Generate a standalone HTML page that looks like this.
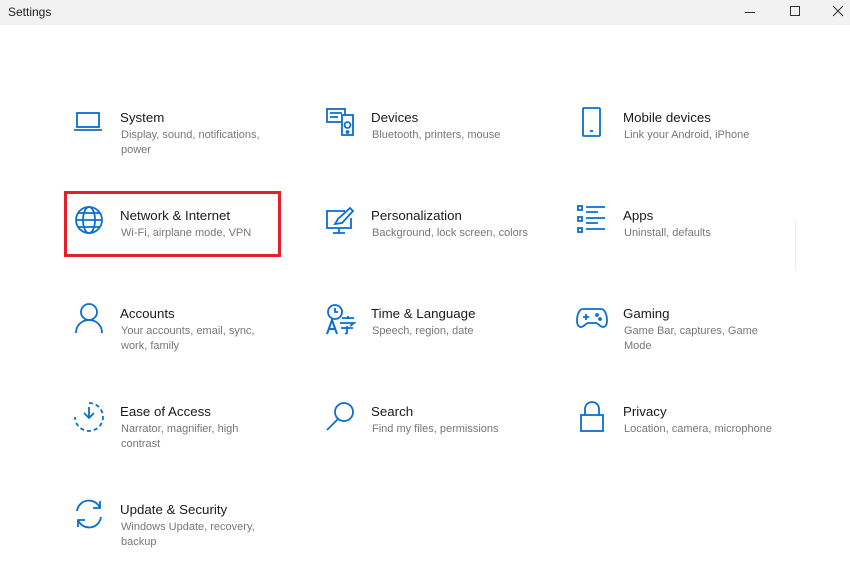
<!DOCTYPE html>
<html><head><meta charset="utf-8"><style>
body{margin:0;width:850px;height:572px;background:#fff;font-family:"Segoe UI","Liberation Sans",sans-serif;position:relative;overflow:hidden}
.tb{position:absolute;left:0;top:0;width:850px;height:25px;background:#f2f2f2}
.tb span{position:absolute;left:8px;top:5px;font-size:12px;color:#222}
.t{position:absolute;font-size:13.3px;color:#1a1a1a;white-space:nowrap}
.d{position:absolute;font-size:11px;color:#777;line-height:15px;width:150px}
svg{position:absolute;fill:none;stroke:#0a6fce;stroke-width:1.8}
.rb{position:absolute;left:64px;top:191px;width:211px;height:60px;border:3px solid #e3202a}
</style></head><body>
<div class="tb"><span>Settings</span>
<svg style="left:744px;top:6px" width="12" height="12" viewBox="0 0 12 12"><path d="M1 6.5h10" stroke="#333" stroke-width="1"/></svg>
<svg style="left:789px;top:5px" width="12" height="12" viewBox="0 0 12 12"><rect x="1.5" y="1.5" width="9" height="9" stroke="#333" stroke-width="1"/></svg>
<svg style="left:832px;top:5px" width="12" height="12" viewBox="0 0 12 12"><path d="M1 1l10 10M11 1L1 11" stroke="#333" stroke-width="1"/></svg>
</div>

<svg style="left:73px;top:110px" width="30" height="24" viewBox="0 0 30 24"><rect x="4" y="3" width="22" height="14"/><path d="M1 20h28"/></svg>
<div class="t" style="left:120px;top:110px">System</div>
<div class="d" style="left:121px;top:128px">Display, sound, notifications, power</div>

<svg style="left:325px;top:107px" width="30" height="30" viewBox="0 0 30 30"><rect x="2" y="2" width="18" height="13"/><path d="M5 6h12M5 10h8"/><rect x="17" y="8" width="11" height="20" fill="#fff"/><circle cx="22.5" cy="18" r="3"/><circle cx="22.5" cy="25" r="1"/></svg>
<div class="t" style="left:371px;top:110px">Devices</div>
<div class="d" style="left:372px;top:128px">Bluetooth, printers, mouse</div>

<svg style="left:580px;top:106px" width="24" height="32" viewBox="0 0 24 32"><rect x="3" y="2" width="17" height="28" rx="1"/><path d="M10 25h3"/></svg>
<div class="t" style="left:623px;top:110px">Mobile devices</div>
<div class="d" style="left:624px;top:128px">Link your Android, iPhone</div>

<div class="rb"></div>
<svg style="left:74px;top:205px" width="30" height="30" viewBox="0 0 30 30"><circle cx="15" cy="15" r="13"/><ellipse cx="15" cy="15" rx="6" ry="13"/><path d="M2 15h26M4 8h22M4 22h22"/></svg>
<div class="t" style="left:120px;top:208px">Network &amp; Internet</div>
<div class="d" style="left:121px;top:226px">Wi-Fi, airplane mode, VPN</div>

<svg style="left:325px;top:206px" width="30" height="30" viewBox="0 0 30 30"><path d="M20 5H2v17h24v-10"/><path d="M14 22v5M8 27h12"/><path d="M10 18l3-5 12-11 3 3-11 12z"/></svg>
<div class="t" style="left:371px;top:208px">Personalization</div>
<div class="d" style="left:372px;top:226px;width:170px">Background, lock screen, colors</div>

<svg style="left:577px;top:205px" width="30" height="28" viewBox="0 0 30 28"><rect x="1" y="1" width="4" height="4"/><rect x="1" y="12" width="4" height="4"/><rect x="1" y="23" width="4" height="4"/><path d="M9 2h19M9 7h12M9 13h19M9 18h12M9 24h19"/></svg>
<div class="t" style="left:623px;top:208px">Apps</div>
<div class="d" style="left:624px;top:226px">Uninstall, defaults</div>
<div style="position:absolute;left:795px;top:220px;width:1px;height:50px;background:#eee"></div>

<svg style="left:74px;top:302px" width="30" height="32" viewBox="0 0 30 32"><circle cx="15" cy="10" r="8"/><path d="M2 31c0-8 6-13 13-13s13 5 13 13"/></svg>
<div class="t" style="left:120px;top:306px">Accounts</div>
<div class="d" style="left:121px;top:324px">Your accounts, email, sync, work, family</div>

<svg style="left:325px;top:303px" width="32" height="32" viewBox="0 0 32 32"><circle cx="10" cy="9" r="7"/><path d="M10 5v4h3"/><path d="M2 31l5-14 5 14M4 26h6" stroke-width="2"/><path d="M17 15h12M23 13v3M15 20h14l-4 3M22 23v7l-2 1M16 25h12"/></svg>
<div class="t" style="left:371px;top:306px">Time &amp; Language</div>
<div class="d" style="left:372px;top:324px">Speech, region, date</div>

<svg style="left:576px;top:306px" width="32" height="24" viewBox="0 0 32 24"><path d="M7 3h18c4 0 6 6 6 12 0 4-2 6-4 6-3 0-5-4-7-4h-8c-2 0-4 4-7 4-2 0-4-2-4-6 0-6 2-12 6-12z"/><path d="M7 11h6M10 8v6"/><circle cx="21" cy="9" r="1"/><circle cx="24" cy="13" r="1"/></svg>
<div class="t" style="left:623px;top:306px">Gaming</div>
<div class="d" style="left:624px;top:324px">Game Bar, captures, Game Mode</div>

<svg style="left:73px;top:401px" width="32" height="32" viewBox="0 0 32 32"><path d="M16 2a14 14 0 1 1-14 14" stroke-dasharray="4 3"/><path d="M16 6v11M11 12l5 5 5-5"/></svg>
<div class="t" style="left:120px;top:404px">Ease of Access</div>
<div class="d" style="left:121px;top:422px">Narrator, magnifier, high contrast</div>

<svg style="left:325px;top:400px" width="32" height="32" viewBox="0 0 32 32"><circle cx="19" cy="12" r="9"/><path d="M13 19L2 30"/></svg>
<div class="t" style="left:371px;top:404px">Search</div>
<div class="d" style="left:372px;top:422px">Find my files, permissions</div>

<svg style="left:578px;top:400px" width="28" height="34" viewBox="0 0 28 34"><path d="M7 15V9a7 7 0 0 1 14 0v6"/><rect x="3" y="15" width="22" height="16"/></svg>
<div class="t" style="left:623px;top:404px">Privacy</div>
<div class="d" style="left:624px;top:422px;width:170px">Location, camera, microphone</div>

<svg style="left:73px;top:498px" width="32" height="32" viewBox="0 0 32 32"><path d="M4 13A12 12 0 0 1 27 10M28 19A12 12 0 0 1 5 22"/><path d="M27 3v7h-7M5 29v-7h7"/></svg>
<div class="t" style="left:120px;top:502px">Update &amp; Security</div>
<div class="d" style="left:121px;top:520px">Windows Update, recovery, backup</div>
</body></html>
